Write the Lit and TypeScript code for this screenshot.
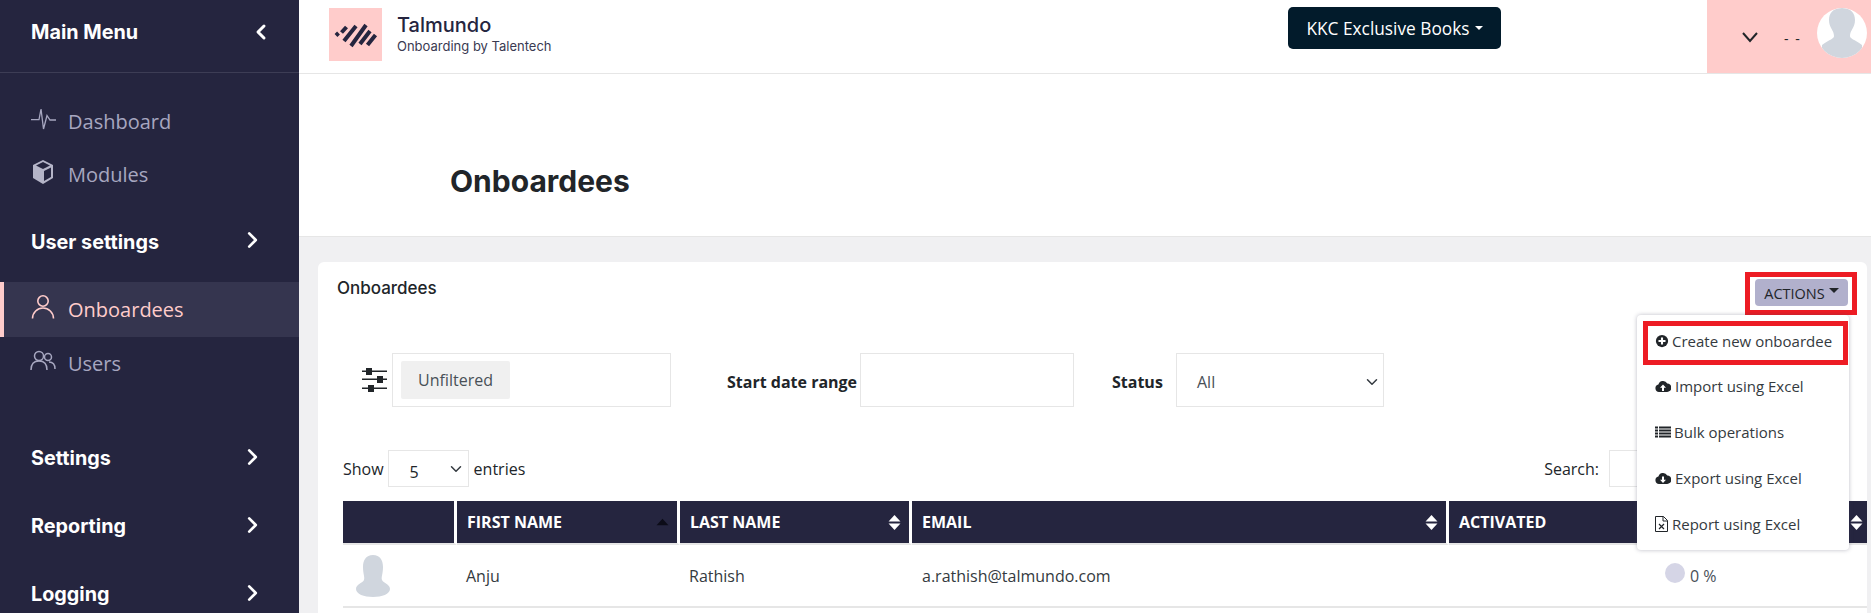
import { LitElement, html, css, svg } from "lit";
import { customElement } from "lit/decorators.js";

const chev = (cls = "nav-chev") => html`<svg class=${cls} viewBox="0 0 10 16"><path d="M2 2l6 6-6 6" fill="none" stroke="#fff" stroke-width="2.4" stroke-linecap="round" stroke-linejoin="round"/></svg>`;
const sel = html`<svg class="sel-chev" viewBox="0 0 16 16"><path d="M2 5l6 6 6-6" fill="none" stroke="#343a40" stroke-width="2" stroke-linecap="round" stroke-linejoin="round"/></svg>`;
const sort = html`<svg class="sort" viewBox="0 0 12 18" preserveAspectRatio="none"><path d="M6 1l5.500 7H.5z" fill="#fff"/><path d="M6 17l5.500-7H.5z" fill="#fff"/></svg>`;
const asc = html`<svg class="sort" viewBox="0 0 12 18" preserveAspectRatio="none"><path d="M6 5l5.500 7H.5z" fill="#0c0c18"/></svg>`;
const bust = svg`<path d="M25 0C16 0 12 5 12 12c0 8 5 10 5 16 0 3-4 3-12 9v13h40V37c-8-6-12-6-12-9 0-6 5-8 5-16C38 5 34 0 25 0z" fill="#d0d6de"/>`;

@customElement("app-root")
export class AppRoot extends LitElement {
  static styles = css`
    :host { display: grid; grid-template-columns: 299px 1fr; height: 613px; overflow: hidden; font-family: "Open Sans", sans-serif; color: #212529; background: #f0f0f2; }
    * { box-sizing: border-box; }
    .side { background: #25253f; color: #fff; min-width: 0; }
    .side-head { height: 73px; border-bottom: 1px solid #3d3d55; padding: 0 32px 8px 31px; display: flex; align-items: center; justify-content: space-between; }
    .side-head span, .group { font-family: Inter, sans-serif; font-weight: 700; font-size: 19.8px; color: #fff; }
    .side-head svg { width: 12px; height: 18px; }
    .item { display: flex; align-items: center; gap: 12px; height: 53px; padding-left: 30px; font-size: 20px; color: #a7a7c0; }
    .item svg { width: 26px; height: 26px; flex: none; margin-top: -6px; }
    .first { margin-top: 22px; }
    .item.active { height: 55px; background: #35354f; border-left: 4px solid #ffcccb; padding-left: 26px; color: #ffcccb; }
    .group { display: flex; align-items: center; justify-content: space-between; padding: 0 41px 0 31px; height: 68px; }
    .nav-chev { width: 11px; height: 18px; margin-top: -3px; }
    .g1 { margin-top: 14px; padding-bottom: 14px; height: 67px; }
    .g2 { margin-top: 34px; }

    .main { min-width: 0; position: relative; display: flex; flex-direction: column; }
    .top { height: 74px; background: #fff; border-bottom: 1px solid #e6e6e6; display: flex; padding-left: 30px; }
    .logo { width: 53px; height: 53px; margin-top: 8px; background: #ffcccb; flex: none; }
    .logo svg { width: 53px; height: 53px; display: block; }
    .brand { margin-left: 15px; width: 150px; flex: none; padding-top: 13px; font-family: Inter, sans-serif; color: #25253f; white-space: nowrap; }
    .brand b { display: block; font-weight: 500; font-size: 20px; line-height: 25px; }
    .brand small { display: block; font-size: 13px; line-height: 16px; color: #3a3a52; }
    .org { margin: 7px 0 0 741px; width: 213px; height: 42px; background: #021b2b; color: #fff; border-radius: 5px; font-size: 17.3px; display: flex; align-items: center; justify-content: center; gap: 5px; flex: none; }
    .caret { width: 0; height: 0; border: 4.8px solid transparent; border-top-color: currentColor; border-bottom: 0; display: inline-block; }
    .user { margin-left: auto; width: 164px; background: #ffcccb; display: flex; align-items: flex-start; }
    .user .down { width: 18px; height: 12px; margin: 31px 0 0 34px; }
    .user .dash { margin: 29px 0 0 25px; font-size: 14px; letter-spacing: 1.5px; width: 33px; line-height: 19px; }
    .user .pic { width: 50px; height: 50px; margin: 8px 0 0 0; border-radius: 50%; background: #fff; overflow: hidden; display: block; }
    .title { height: 163px; background: #fff; border-bottom: 1px solid #e6e6e6; padding: 90px 0 0 151px; font-family: Inter, sans-serif; font-weight: 700; font-size: 30px; line-height: 34px; color: #212529; }
    .card { margin: 25px 4px 0 19px; flex: 1; background: #fff; border-radius: 6px 6px 0 0; padding: 15px 0 0 25px; position: relative; }
    .card-head { display: flex; justify-content: space-between; height: 76px; margin-left: -6px; }
    .card-head h2 { margin: 0; font-family: Inter, sans-serif; font-weight: 500; font-size: 17px; line-height: 22px; }
    .filters { display: flex; align-items: stretch; height: 54px; }
    .slider { width: 25px; height: 24px; margin: 15px 5px 0 19px; flex: none; }
    .box { border: 1px solid #e6e6e6; background: #fff; height: 54px; flex: none; }
    .fbox { width: 279px; padding: 7px 8px; }
    .chip { width: 109px; height: 38px; background: #f0f0f0; border-radius: 2px; font-size: 16px; color: #495057; display: flex; align-items: center; justify-content: center; }
    .lab { font-weight: 700; font-size: 16px; display: flex; align-items: center; padding-top: 4px; white-space: nowrap; flex: none; }
    .l1 { margin-left: 56px; width: 133px; }
    .dbox { width: 214px; }
    .l2 { margin-left: 38px; width: 64px; }
    .sbox { width: 208px; display: flex; align-items: center; justify-content: space-between; padding: 3px 5px 0 20px; font-size: 16px; color: #495057; }
    .sel-chev { width: 12px; height: 12px; }
    .tools { display: flex; align-items: center; margin-top: 43px; height: 37px; font-size: 16px; color: #212529; width: 1524px; }
    .len { width: 81px; height: 37px; margin: 0 5px 0 4px; display: flex; align-items: center; justify-content: space-between; padding: 6px 6px 0 21px; font-size: 16px; }
    .len .sel-chev { margin-top: -6px; }
    .search { margin-left: auto; margin-right: 20px; display: flex; align-items: center; gap: 10px; }
    .search .box { width: 238px; height: 37px; }
    table { border-collapse: separate; border-spacing: 0; table-layout: fixed; width: 1524px; margin-top: 14px; font-size: 16px; }
    th { background: #25253f; color: #fff; text-align: left; font-weight: 700; font-size: 16px; height: 44px; padding: 0 10px; border-right: 3px solid #fff; border-bottom: 2px solid #e6e6e6; position: relative; text-transform: uppercase; }
    th:last-child { border-right: 0; }
    th .sort { position: absolute; right: 8px; top: 13px; width: 13px; height: 17px; }
    th:last-child .sort { right: 4px; }
    td { height: 63px; border-bottom: 2px solid #e6e6e6; padding: 0 9px; color: #343a40; }
    td:nth-child(4) { padding-left: 10px; }
    .av { width: 34px; height: 42px; display: block; margin-left: 4px; }
    .pct { display: flex; align-items: center; gap: 5px; padding-left: 207px; color: #495057; }
    .pct i { width: 20px; height: 20px; border-radius: 50%; background: #d5d5e6; margin-top: -6px; }

    .actions { position: absolute; right: 10px; top: 10px; border: 5px solid #ed1c24; padding: 2px 4px 4px 5px; height: 43px; }
    .actions div { width: 93px; height: 27px; padding-top: 2px; background: #b1b0cc; border-radius: 4px; display: flex; align-items: center; justify-content: center; gap: 4px; font-size: 14.5px; color: #212529; }
    .actions .caret { border-width: 5.500px; border-bottom: 0; margin-top: -6px; }
    .menu { position: absolute; left: 1319px; top: 53px; width: 212px; height: 235px; background: #fff; border-radius: 4px; box-shadow: 0 0 4px rgba(60,60,90,.35); padding: 6px 1px 0 6px; font-size: 15px; color: #343a40; }
    .menu a { display: flex; align-items: center; height: 46px; padding: 0 0 8px 12px; }
    .menu a svg { width: 16px; height: 16px; flex: none; margin-right: 4px; }
    .menu a.hot { border: 5px solid #ed1c24; height: 44px; padding: 0 0 5px 7px; margin-bottom: 2px; }
    .menu a.hot svg { width: 14px; height: 14px; margin-right: 3px; }
    .menu a.bulk svg { margin-right: 3px; }
    .menu a.rep svg { width: 13px; }
  `;

  render() {
    return html`
      <aside class="side">
        <div class="side-head"><span>Main Menu</span><svg viewBox="0 0 12 18"><path d="M9 3L3 9l6 6" fill="none" stroke="#fff" stroke-width="3" stroke-linecap="round" stroke-linejoin="round"/></svg></div>
        <div class="item first"><svg viewBox="0 0 26 26" fill="none" stroke="#a7a7c0" stroke-width="1.3"><path d="M1 13.700h8L11 3l2.500 20L17 9.500l3 4.500h6"/></svg>Dashboard</div>
        <div class="item"><svg viewBox="0 0 26 26"><path d="M13 1l10 5v13l-10 6L3 19V6z" fill="#b5b5c8"/><path d="M13 3l7 3.500-7 3.500-7-3.500z M14 12l7-3.500v9.500l-7 4z" fill="#25253f"/></svg>Modules</div>
        <div class="group g1">User settings ${chev()}</div>
        <div class="item active"><svg viewBox="0 0 26 26" fill="none" stroke="#ffcccb" stroke-width="1.6"><circle cx="13" cy="7" r="5.200"/><path d="M2.500 24.500c0-6 5-10.500 10.500-10.500s10.500 4.500 10.500 10.500"/></svg>Onboardees</div>
        <div class="item"><svg viewBox="0 0 26 26" fill="none" stroke="#a7a7c0" stroke-width="1.5"><circle cx="9" cy="8" r="4.500"/><path d="M1 22c0-6 3-9 8-9s8 3 8 9"/><circle cx="18" cy="9" r="3.500"/><path d="M19 14c4 0 6 3 6 7"/></svg>Users</div>
        <div class="group g2">Settings ${chev()}</div>
        <div class="group">Reporting ${chev()}</div>
        <div class="group">Logging ${chev()}</div>
      </aside>
      <main class="main">
        <header class="top">
          <div class="logo"><svg viewBox="0 0 53 53" fill="none" stroke="#25253f" stroke-width="4"><path d="M7 27.500l2.500-2.500M12.500 24.500l5-5.500M15 33l12-15M22 38l15-21M31 36l10-13M38.500 37l8-10"/></svg></div>
          <div class="brand"><b>Talmundo</b><small>Onboarding by Talentech</small></div>
          <div class="org">KKC Exclusive Books <i class="caret"></i></div>
          <div class="user">
            <svg class="down" viewBox="0 0 18 12"><path d="M2 2l7 8 7-8" fill="none" stroke="#212529" stroke-width="2"/></svg>
            <span class="dash">- -</span>
            <svg class="pic" viewBox="0 0 50 50">${bust}</svg>
          </div>
        </header>
        <div class="title">Onboardees</div>
        <section class="card">
          <div class="card-head"><h2>Onboardees</h2></div>
          <div class="filters">
            <svg class="slider" viewBox="0 0 25 24" fill="#212529"><path d="M0 2.500h25v1.400H0zM0 10.500h25v1.400H0zM0 19.500h25v1.400H0z"/><path d="M4 0h6v7H4zM15 8h6v7h-6zM6 17h6v7H6z"/></svg>
            <div class="box fbox"><div class="chip">Unfiltered</div></div>
            <div class="lab l1">Start date range</div>
            <div class="box dbox"></div>
            <div class="lab l2">Status</div>
            <div class="box sbox">All ${sel}</div>
          </div>
          <div class="tools">Show <div class="box len">5 ${sel}</div> entries
            <div class="search">Search: <div class="box"></div></div>
          </div>
          <table>
            <colgroup><col style="width:114px"/><col style="width:223px"/><col style="width:232px"/><col style="width:537px"/><col/></colgroup>
            <thead><tr>
              <th></th>
              <th>First name ${asc}</th>
              <th>Last name ${sort}</th>
              <th>Email ${sort}</th>
              <th>Activated ${sort}</th>
            </tr></thead>
            <tbody><tr>
              <td><svg class="av" viewBox="0 0 34 42"><path d="M17 0C10 0 7 5 7 12c0 7 2 10 1 13-1 3-8 4-8 9 0 5 8 8 17 8s17-3 17-8c0-5-7-6-8-9-1-3 1-6 1-13 0-7-3-12-10-12z" fill="#d0d6de"/></svg></td>
              <td>Anju</td><td>Rathish</td><td>a.rathish@talmundo.com</td>
              <td><div class="pct"><i></i>0 %</div></td>
            </tr></tbody>
          </table>
          <div class="actions"><div>ACTIONS <i class="caret"></i></div></div>
          <div class="menu">
            <a class="hot"><svg viewBox="0 0 16 16"><circle cx="8" cy="8" r="7" fill="#212529"/><path d="M4 8h8M8 4v8" stroke="#fff" stroke-width="2.400"/></svg>Create new onboardee</a>
            <a><svg viewBox="0 0 16 16"><path d="M4 14a3.800 3.800 0 0 1-.6-7.500A4.800 4.800 0 0 1 12.300 5.500 4.200 4.200 0 0 1 12 14z" fill="#212529"/><path d="M8 6.500l3 3.200H9V13H7V9.700H5z" fill="#fff"/></svg>Import using Excel</a>
            <a class="bulk"><svg viewBox="0 0 16 16" fill="#212529"><path d="M0 2.500h3v2H0zM4 2.500h12v2H4zM0 5.500h3v2H0zM4 5.500h12v2H4zM0 8.500h3v2H0zM4 8.500h12v2H4zM0 11.500h3v2H0zM4 11.500h12v2H4z"/></svg>Bulk operations</a>
            <a><svg viewBox="0 0 16 16"><path d="M4 14a3.800 3.800 0 0 1-.6-7.500A4.800 4.800 0 0 1 12.300 5.500 4.200 4.200 0 0 1 12 14z" fill="#212529"/><path d="M8 13L5 9.800h2V6.500h2v3.300h2z" fill="#fff"/></svg>Export using Excel</a>
            <a class="rep"><svg viewBox="0 0 13 16" fill="none" stroke="#212529"><path d="M.5.500h8l4 4v11H.5zM8 .5v4.500h4.500"/><path d="M4 8l5 5M9 8l-5 5" stroke-width="1.200"/></svg>Report using Excel</a>
          </div>
        </section>
      </main>
    `;
  }
}
